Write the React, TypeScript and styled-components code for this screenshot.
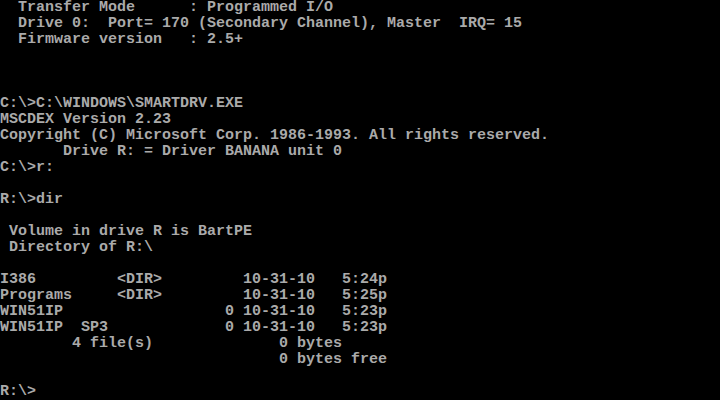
import React from "react";
import styled, { createGlobalStyle } from "styled-components";

const GlobalStyle = createGlobalStyle`
  html, body {
    margin: 0;
    padding: 0;
    background: #000;
  }
`;

const Screen = styled.div`
  width: 720px;
  height: 400px;
  background-color: #000;
  color: #aaaaaa;
  font-family: "Liberation Mono", "DejaVu Sans Mono", monospace;
  font-size: 15px;
  font-weight: bold;
  overflow: hidden;
  display: flex;
  flex-direction: column;
`;

const Line = styled.div`
  height: 16px;
  line-height: 16px;
  white-space: pre;
`;

// 80x25 text mode, one entry per row
const rows: string[] = [
  "  Transfer Mode      : Programmed I/O",
  "  Drive 0:  Port= 170 (Secondary Channel), Master  IRQ= 15",
  "  Firmware version   : 2.5+",
  "",
  "",
  "",
  "C:\\>C:\\WINDOWS\\SMARTDRV.EXE",
  "MSCDEX Version 2.23",
  "Copyright (C) Microsoft Corp. 1986-1993. All rights reserved.",
  "       Drive R: = Driver BANANA unit 0",
  "C:\\>r:",
  "",
  "R:\\>dir",
  "",
  " Volume in drive R is BartPE",
  " Directory of R:\\",
  "",
  "I386         <DIR>         10-31-10   5:24p",
  "Programs     <DIR>         10-31-10   5:25p",
  "WIN51IP                  0 10-31-10   5:23p",
  "WIN51IP  SP3             0 10-31-10   5:23p",
  "        4 file(s)              0 bytes",
  "                               0 bytes free",
  "",
  "R:\\>",
];

export default function App() {
  return (
    <>
      <GlobalStyle />
      <Screen>
        {rows.map((text, i) => (
          <Line key={i}>{text}</Line>
        ))}
      </Screen>
    </>
  );
}
